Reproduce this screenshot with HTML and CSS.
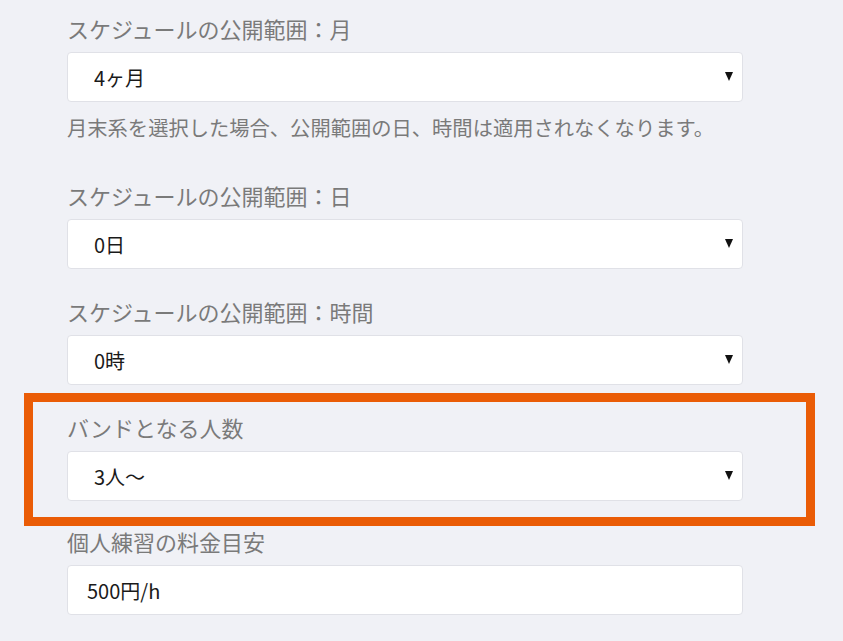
FILE: index.html
```html
<!DOCTYPE html>
<html lang="ja">
<head>
    <meta charset="UTF-8">
    <meta name="viewport" content="width=device-width, initial-scale=1.0">
    <title>スケジュール設定</title>
    <link rel="stylesheet" href="styles.css">
</head>
<body>

<div class="settings">
    <div class="form-group has-help">
        <label class="field-label" for="month_select">スケジュールの公開範囲：月</label>
        <div class="select-wrap">
            <select id="month_select">
                <option>4ヶ月</option>
            </select>
        </div>
        <p class="help">月末系を選択した場合、公開範囲の日、時間は適用されなくなります。</p>
    </div>

    <div class="form-group">
        <label class="field-label" for="day_select">スケジュールの公開範囲：日</label>
        <div class="select-wrap">
            <select id="day_select">
                <option>0日</option>
            </select>
        </div>
    </div>

    <div class="form-group">
        <label class="field-label" for="hour_select">スケジュールの公開範囲：時間</label>
        <div class="select-wrap">
            <select id="hour_select">
                <option>0時</option>
            </select>
        </div>
    </div>

    <!-- highlighted field -->
    <div class="form-group highlight">
        <label class="field-label" for="band_select">バンドとなる人数</label>
        <div class="select-wrap">
            <select id="band_select">
                <option>3人〜</option>
            </select>
        </div>
    </div>

    <div class="form-group">
        <label class="field-label" for="price_input">個人練習の料金目安</label>
        <input type="text" id="price_input" value="500円/h">
    </div>
</div>

</body>
</html>
```

FILE: styles.css
```css
body {
    font-family: "Noto Sans CJK JP", "Noto Sans", sans-serif;
    background-color: #f0f1f6;
    margin: 0;
    padding: 0;
}

.settings {
    width: 676px;
    margin-left: 67px;
    padding-top: 14px;
}

.form-group {
    margin-bottom: 28px;
}

.form-group.has-help {
    margin-bottom: 40px;
}

.field-label {
    display: block;
    font-size: 22px;
    line-height: 28px;
    color: #7a7a7a;
    margin-bottom: 10px;
}

.select-wrap {
    position: relative;
}

/* small black arrow on the right of each select */
.select-wrap::after {
    content: "";
    position: absolute;
    right: 10px;
    top: 20px;
    border-left: 4.5px solid transparent;
    border-right: 4.5px solid transparent;
    border-top: 9px solid #111;
    pointer-events: none;
}

select,
input {
    display: block;
    width: 100%;
    height: 50px;
    box-sizing: border-box;
    background-color: #fff;
    border: 1px solid #e0e1e7;
    border-radius: 4px;
    font-family: inherit;
    font-size: 20px;
    color: #1a1a1a;
    margin: 0;
}

select {
    appearance: none;
    -webkit-appearance: none;
    padding: 0 26px;
}

input {
    padding: 0 19px;
}

.help {
    margin: 11px 0 0;
    font-size: 20.3px;
    line-height: 28px;
    color: #7a7a7a;
}

.highlight {
    border: 9px solid #ea5c06;
    margin: -20px -72px 1px -43px;
    padding: 11px 63px 16px 34px;
}
```
